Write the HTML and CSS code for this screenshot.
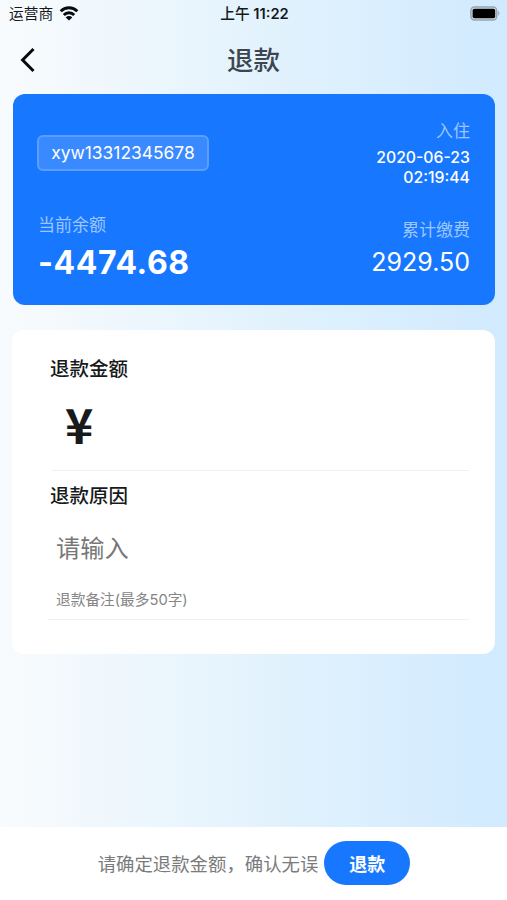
FILE: index.html
```html
<!DOCTYPE html>
<html lang="zh-CN">
<head>
<meta charset="utf-8">
<title>退款</title>
<link rel="stylesheet" href="styles.css">
</head>
<body>
<div class="screen">
  <div class="status">
    <div class="carrier"><span>运营商</span>
      <svg class="wifi" width="20" height="15" viewBox="0 0 20 15" fill="none" stroke="#080b0e" stroke-width="2.9"><path d="M1.7 5.2a11.8 11.8 0 0 1 16.6 0M4.8 8.9a7.3 7.3 0 0 1 10.4 0"/><path d="M10 14.6 6.7 11.4a4.6 4.6 0 0 1 6.6 0Z" fill="#080b0e" stroke="none"/></svg>
    </div>
    <div class="clock"><span class="period">上午</span> 11:22</div>
    <svg class="battery" width="31" height="15" viewBox="0 0 31 15"><rect x=".9" y=".9" width="25.8" height="13" rx="3.6" fill="#d5dee5" stroke="#98a5af" stroke-width="1.5"/><rect x="2.6" y="2.8" width="22.6" height="9.4" rx="1.8" fill="#000"/><path d="M28.2 4.8q2.4 2.6 0 5.2Z" fill="#98a5af"/></svg>
  </div>
  <div class="nav">
    <svg class="back" width="18" height="26" viewBox="0 0 18 26" fill="none" stroke="#08090b" stroke-width="3"><path d="M15.5 2 4.6 13 15.5 24"/></svg>
    <h1>退款</h1>
  </div>
  <section class="account">
    <div class="column">
      <div class="user">xyw13312345678</div>
      <div class="label">当前余额</div>
      <div class="balance">-4474.68</div>
    </div>
    <div class="column right">
      <div class="label">入住</div>
      <div class="date">2020-06-23<br>02:19:44</div>
      <div class="label paid-label">累计缴费</div>
      <div class="paid">2929.50</div>
    </div>
  </section>
  <section class="form">
    <h2>退款金额</h2>
    <div class="amount">¥</div>
    <h2 class="reason-title">退款原因</h2>
    <div class="reason">请输入</div>
    <div class="remark">退款备注(最多50字)</div>
  </section>
  <footer class="footer">
    <span class="hint">请确定退款金额，确认无误</span>
    <button class="submit">退款</button>
  </footer>
</div>
</body>
</html>
```
FILE: styles.css
```css
* { box-sizing: border-box; }
body {
  margin: 0;
  font-family: Inter, "Noto Sans CJK SC", sans-serif;
}
h1, h2 { margin: 0; font-weight: 500; }
.screen {
  height: 900px;
  display: flex;
  flex-direction: column;
  background: linear-gradient(90deg, #f8fbfd 0%, #eef7fd 25%, #dff1fd 60%, #d1eaff 100%);
}
.status {
  height: 28px;
  padding: 0 6px 0 9px;
  display: grid;
  grid-template-columns: 1fr auto 1fr;
  align-items: center;
  color: #15191d;
  font-size: 14.7px;
  line-height: 28px;
}
.carrier { display: flex; align-items: center; gap: 6px; }
.wifi { margin-bottom: 2px; }
.clock { font-weight: 600; font-size: 14.7px; margin-right: 1px; }
.period { font-weight: 500; }
.battery { justify-self: end; margin-bottom: 1px; }
.nav {
  height: 66px;
  padding: 0 18px;
  display: grid;
  grid-template-columns: 1fr auto 1fr;
  align-items: center;
}
.nav h1 { font-size: 26.5px; line-height: 62px; margin-bottom: 2px; color: #3d4650; }
.back { margin-bottom: 3px; }
.account {
  height: 211px;
  margin: 0 12px 0 13px;
  padding: 25px 25px 0;
  display: flex;
  justify-content: space-between;
  background: #1877ff;
  border-radius: 12px;
  color: #fff;
}
.column { display: flex; flex-direction: column; align-items: flex-start; }
.right { align-items: flex-end; text-align: right; }
.label { font-size: 17px; line-height: 25px; color: #9dc6ff; }
.user {
  width: 172px;
  height: 36px;
  margin: 16px 0 42px -1px;
  border: 2px solid #5b9eff;
  border-radius: 6px;
  background: #3a8aff;
  font-size: 17.4px;
  line-height: 32px;
  text-align: center;
}
.balance { font-size: 32px; font-weight: 700; line-height: 40px; letter-spacing: .6px; margin-top: 5px; }
.date { font-size: 15.8px; line-height: 19.5px; margin-top: 4px; font-weight: 450; }
.paid-label { margin-top: 31px; }
.paid { font-size: 25px; line-height: 36px; margin-top: 1px; }
.form {
  height: 324px;
  margin: 24.5px 12px 0 12px;
  padding: 24px 26px 0 38px;
  background: #fff;
  border-radius: 12px;
}
.form h2 { font-size: 19.5px; line-height: 30px; color: #17191b; }
.amount {
  height: 87px;
  margin-left: 2px;
  padding: 4px 0 0 13px;
  border-bottom: 1px solid #f1f1f1;
  font-family: "Noto Sans CJK SC", sans-serif;
  font-size: 48px;
  line-height: 70px;
  font-weight: 700;
  color: #17191b;
}
.form .reason-title { margin-top: 10px; }
.reason { margin: 18px 0 0 6px; font-size: 24.2px; line-height: 40px; color: #777; }
.remark {
  height: 51px;
  margin-left: -2px;
  padding: 16px 0 0 8px;
  border-bottom: 1px solid #f1f1f1;
  font-size: 14.7px;
  line-height: 30px;
  color: #858585;
}
.footer {
  height: 73px;
  margin-top: auto;
  padding-left: 1px;
  display: flex;
  align-items: center;
  justify-content: center;
  gap: 6px;
  background: #fff;
}
.hint { font-size: 18.4px; color: #7b7b7b; margin-bottom: 1px; }
.submit {
  width: 86px;
  height: 44px;
  margin-bottom: 1px;
  padding: 0;
  border: 0;
  border-radius: 22px;
  background: #1877ff;
  color: #fff;
  font: 600 18px/43px "Noto Sans CJK SC", sans-serif;
}
```
